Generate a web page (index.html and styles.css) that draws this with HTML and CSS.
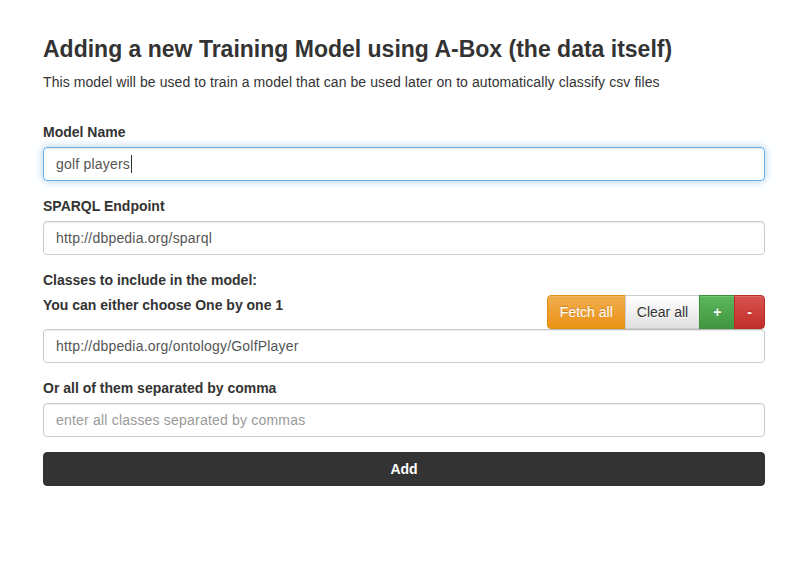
FILE: index.html
```html
<!DOCTYPE html>
<html lang="en">
<head>
<meta charset="utf-8">
<title>Adding a new Training Model</title>
<link rel="stylesheet" href="styles.css">
</head>
<body>
<div class="container">
  <h3 class="title">Adding a new Training Model using A-Box (the data itself)</h3>
  <p class="lead">This model will be used to train a model that can be used later on to automatically classify csv files</p>
  <form class="form">
    <div class="form-group">
      <label class="label">Model Name</label>
      <div class="form-control focused"><span>golf players</span><span class="caret"></span></div>
    </div>
    <div class="form-group">
      <label class="label">SPARQL Endpoint</label>
      <input class="form-control" type="text" value="http://dbpedia.org/sparql">
    </div>
    <div class="form-group">
      <label class="label">Classes to include in the model:</label>
      <div class="class-row">
        <label class="label row-label">You can either choose One by one 1</label>
        <div class="btn-group">
          <button type="button" class="btn btn-warning">Fetch all</button>
          <button type="button" class="btn btn-default">Clear all</button>
          <button type="button" class="btn btn-success">+</button>
          <button type="button" class="btn btn-danger">-</button>
        </div>
      </div>
      <input class="form-control" type="text" value="http://dbpedia.org/ontology/GolfPlayer">
    </div>
    <div class="form-group">
      <label class="label">Or all of them separated by comma</label>
      <input class="form-control" type="text" placeholder="enter all classes separated by commas">
    </div>
    <button type="button" class="btn btn-block btn-dark">Add</button>
  </form>
</div>
</body>
</html>
```

FILE: styles.css
```css
* { box-sizing: border-box; }
html, body { margin: 0; padding: 0; background: #fff; }
body {
  font-family: "Liberation Sans", Arial, Helvetica, sans-serif;
  font-size: 14px;
  line-height: 20px;
  color: #333;
}
.container { padding: 16px 38px 0 43px; }
.title {
  margin: 20px 0 10px;
  font-size: 23px;
  font-weight: bold;
  line-height: 26.4px;
  color: #333;
}
.lead { margin: 0 0 30px; letter-spacing: 0.08px; }
.form { margin: 0; }
.form-group { margin-bottom: 15px; }
.label {
  display: block;
  font-weight: bold;
  margin-bottom: 5px;
}
.form-control {
  display: block;
  width: 100%;
  height: 34px;
  padding: 6px 12px;
  font-family: inherit;
  font-size: 14px;
  line-height: 20px;
  letter-spacing: 0.2px;
  color: #555;
  background: #fff;
  border: 1px solid #ccc;
  border-radius: 4px;
  box-shadow: inset 0 1px 1px rgba(0,0,0,.075);
  outline: none;
  margin: 0;
}
.form-control::placeholder { color: #999; }
.focused {
  border-color: #66afe9;
  box-shadow: inset 0 1px 1px rgba(0,0,0,.075), 0 0 8px rgba(102,175,233,.6);
  display: flex;
  align-items: center;
}
.caret {
  display: inline-block;
  width: 1px;
  height: 18px;
  background: #333;
  margin-left: 1px;
}
.class-row {
  display: flex;
  justify-content: space-between;
  align-items: flex-start;
}
.row-label { margin: 0; }
.btn-group { display: flex; }
.btn {
  display: inline-block;
  height: 34px;
  padding: 6px 12px;
  font-family: inherit;
  font-size: 14px;
  line-height: 20px;
  font-weight: normal;
  text-align: center;
  border: 1px solid transparent;
  border-radius: 4px;
  margin: 0;
  cursor: pointer;
}
.btn-group .btn { border-radius: 0; }
.btn-group .btn + .btn { margin-left: -1px; }
.btn-group .btn:first-child { border-radius: 4px 0 0 4px; }
.btn-group .btn:last-child { border-radius: 0 4px 4px 0; }
.btn-warning {
  color: #fff;
  background-image: linear-gradient(to bottom, #f0ad4e 0, #eb9316 100%);
  border-color: #e38d13;
  text-shadow: 0 -1px 0 rgba(0,0,0,.2);
  box-shadow: inset 0 1px 0 rgba(255,255,255,.15), 0 1px 1px rgba(0,0,0,.075);
}
.btn-default {
  color: #333;
  padding: 6px 11px;
  background-image: linear-gradient(to bottom, #fff 0, #e0e0e0 100%);
  border-color: #ccc;
  text-shadow: 0 1px 0 #fff;
  box-shadow: inset 0 1px 0 rgba(255,255,255,.15), 0 1px 1px rgba(0,0,0,.075);
}
.btn-success {
  color: #fff;
  font-weight: bold;
  padding: 6px 13px;
  background-image: linear-gradient(to bottom, #5cb85c 0, #419641 100%);
  border-color: #3e8f3e;
  text-shadow: 0 -1px 0 rgba(0,0,0,.2);
  box-shadow: inset 0 1px 0 rgba(255,255,255,.15), 0 1px 1px rgba(0,0,0,.075);
}
.btn-danger {
  color: #fff;
  font-weight: bold;
  background-image: linear-gradient(to bottom, #d9534f 0, #c12e2a 100%);
  border-color: #b92c28;
  text-shadow: 0 -1px 0 rgba(0,0,0,.2);
  box-shadow: inset 0 1px 0 rgba(255,255,255,.15), 0 1px 1px rgba(0,0,0,.075);
}
.btn-block { display: block; width: 100%; }
.btn-dark {
  color: #fff;
  background: #333;
  border-color: #333;
  font-weight: bold;
}
```
